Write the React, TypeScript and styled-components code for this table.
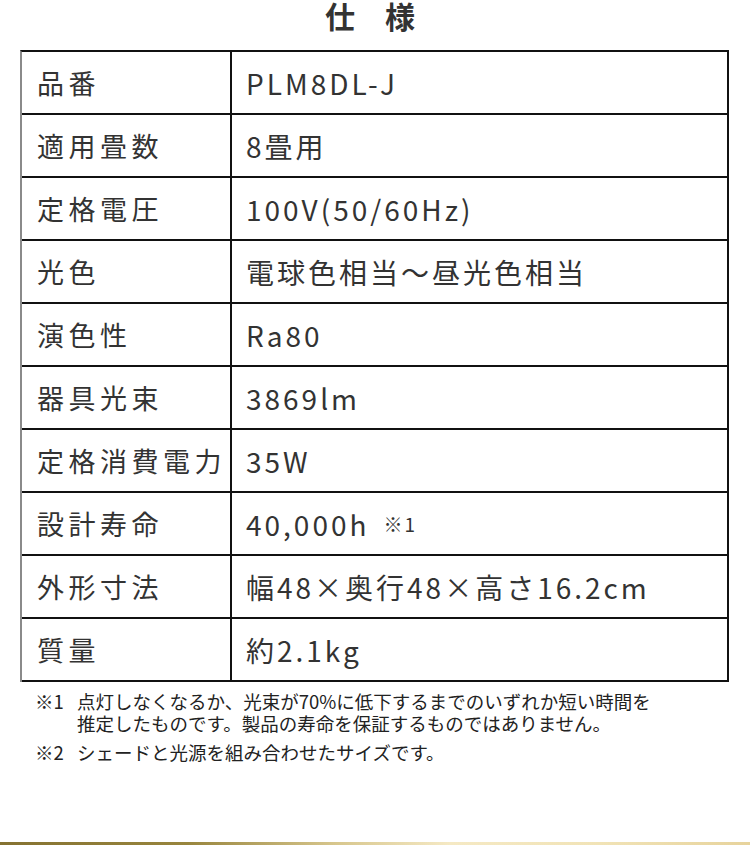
import React from 'react';
import styled, { createGlobalStyle } from 'styled-components';

const GlobalStyle = createGlobalStyle`
    html, body {
        margin: 0;
        padding: 0;
        background: #fff;
    }
    body {
        font-family: "Noto Sans CJK JP", "Noto Sans", sans-serif;
        color: #333;
    }
`;

const Page = styled.div`
    width: 750px;
    height: 845px;
    display: flex;
    flex-direction: column;
    overflow: hidden;
`;

const Title = styled.h1`
    margin: 0;
    padding-right: 10px;
    height: 50px;
    font-size: 30px;
    line-height: 30px;
    font-weight: 700;
    text-align: center;
    color: #333;
`;

const Table = styled.div`
    margin: 0 21px 0 20px;
    display: grid;
    grid-template-columns: 210px 1fr;
    border-top: 2px solid #111;
    border-right: 2px solid #111;
    border-left: 2px solid #8a8a8a;
`;

const Cell = styled.div<{ $label?: boolean }>`
    height: 61px;
    display: flex;
    align-items: center;
    border-bottom: 2px solid #111;
    border-right: ${p => (p.$label ? '2px solid #111' : 'none')};
    padding-left: ${p => (p.$label ? '15px' : '14px')};
    font-size: ${p => (p.$label ? '27px' : '28px')};
    letter-spacing: ${p => (p.$label ? '4.5px' : '3px')};
    color: #333;
    white-space: nowrap;
`;

const Note = styled.span`
    font-size: 19px;
    letter-spacing: 2px;
    margin-left: 14px;
`;

const Notes = styled.div`
    padding: 8px 0 0 35px;
    font-size: 18.5px;
    line-height: 22px;
    color: #222;
    letter-spacing: 0;
`;

const NoteRow = styled.div`
    display: grid;
    grid-template-columns: 42px 1fr;
    margin-bottom: 7px;
`;

const Spacer = styled.div`
    flex: 1;
`;

const GoldLine = styled.div`
    height: 3px;
    background: linear-gradient(90deg, #857231 0%, #98853d 25%, #d8c78e 45%, #f5e9c4 60%, #f1e3b6 80%, #e7d39c 100%);
`;

type Row = { label: string; value: React.ReactNode };

const rows: Row[] = [
    { label: '品番', value: 'PLM8DL-J' },
    { label: '適用畳数', value: '8畳用' },
    { label: '定格電圧', value: '100V(50/60Hz)' },
    { label: '光色', value: '電球色相当～昼光色相当' },
    { label: '演色性', value: 'Ra80' },
    { label: '器具光束', value: '3869lm' },
    { label: '定格消費電力', value: '35W' },
    { label: '設計寿命', value: <>40,000h<Note>※1</Note></> },
    { label: '外形寸法', value: '幅48×奥行48×高さ16.2cm' },
    { label: '質量', value: '約2.1kg' },
];

const App = () => {
    return (
        <Page>
            <GlobalStyle />
            <Title>仕　様</Title>
            <Table>
                {rows.map(r => (
                    <React.Fragment key={r.label}>
                        <Cell $label>{r.label}</Cell>
                        <Cell>{r.value}</Cell>
                    </React.Fragment>
                ))}
            </Table>
            <Notes>
                <NoteRow>
                    <span>※1</span>
                    <span>
                        点灯しなくなるか、光束が70%に低下するまでのいずれか短い時間を
                        <br />
                        推定したものです。製品の寿命を保証するものではありません。
                    </span>
                </NoteRow>
                <NoteRow>
                    <span>※2</span>
                    <span>シェードと光源を組み合わせたサイズです。</span>
                </NoteRow>
            </Notes>
            <Spacer />
            <GoldLine />
        </Page>
    );
};

export default App;
